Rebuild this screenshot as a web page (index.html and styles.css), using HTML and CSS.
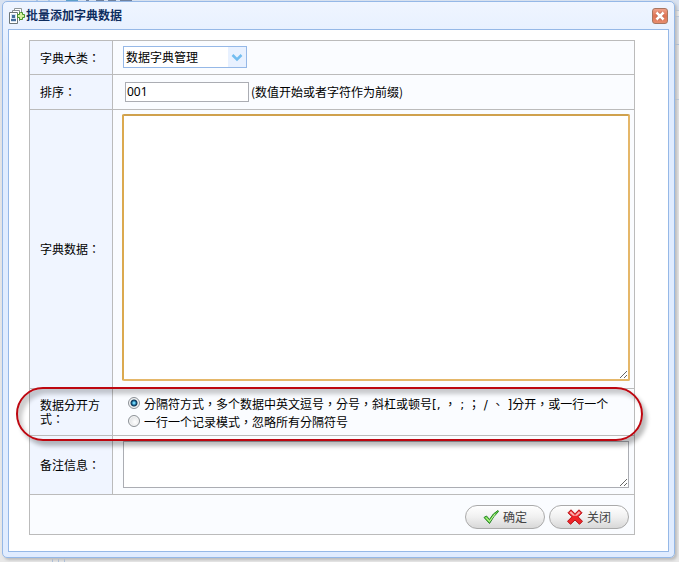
FILE: index.html
```html
<!DOCTYPE html>
<html lang="zh-Hant">
<head>
<meta charset="utf-8">
<title>批量添加字典数据</title>
<link rel="stylesheet" href="styles.css">
</head>
<body>
<div class="backdrop" aria-hidden="true"><span class="toolbar"></span><span class="right-edge"></span><span class="footer-lines"></span></div>
<main class="dialog">
  <header class="titlebar">
    <svg class="title-icon" viewBox="0 0 16 16" aria-hidden="true">
      <path d="M5.500 10V.5h7V12" fill="#fff" stroke="#8f9698"/>
      <path d="M3.500 13V2.500h7V13" fill="#fff" stroke="#858d90"/>
      <path d="M.5 4.500h8v11h-8z" fill="#fff" stroke="#6d7678"/>
      <path d="M2 6h5v8H2z" fill="#d3e1ef"/>
      <path d="M3 7h3v3H3zM2 11h5v2H2z" fill="#456d9b"/>
      <path d="M11.500 4.500h2v2h2v3h-2v2h-3v-2h-2v-3h2v-2z" fill="#d8f0a0" stroke="#47942b"/>
    </svg>
    <h1 class="title">批量添加字典数据</h1>
    <button class="close" type="button" aria-label="关闭窗口">
      <svg viewBox="0 0 16 16"><path d="M4.500 4.500l7 7M11.500 4.500l-7 7" stroke="#b5604c" stroke-width="4.500"/><path d="M4 4l8 8M12 4l-8 8" stroke="#fff" stroke-width="3"/></svg>
    </button>
  </header>
  <form class="content">
    <div class="form">
      <div class="row row-select">
        <label class="label" for="category">字典大类：</label>
        <div class="field">
          <span class="select-box">
            <select id="category"><option>数据字典管理</option></select>
            <svg class="arrow" viewBox="0 0 18 20" aria-hidden="true"><path d="M4.500 8l4.500 4.500L13.500 8" fill="none" stroke="#72bdf0" stroke-width="2.500"/></svg>
          </span>
        </div>
      </div>
      <div class="row row-order">
        <label class="label" for="order">排序：</label>
        <div class="field order-field">
          <input class="text-input" id="order" type="text" value="001">
          <span>(数值开始或者字符作为前缀)</span>
        </div>
      </div>
      <div class="row">
        <label class="label" for="data">字典数据：</label>
        <div class="field area-field"><textarea class="area area-active" id="data"></textarea></div>
      </div>
      <div class="row row-mode">
        <span class="label" id="mode-label">数据分开方式：</span>
        <div class="field modes" role="radiogroup" aria-labelledby="mode-label">
          <label class="mode"><input type="radio" name="mode" checked><span>分隔符方式，多个数据中英文逗号，分号，斜杠或顿号<span class="separators">[, ， ; ； / 、 ]</span>分开，或一行一个</span></label>
          <label class="mode"><input type="radio" name="mode"><span>一行一个记录模式，忽略所有分隔符号</span></label>
        </div>
        <div class="highlight"></div>
      </div>
      <div class="row">
        <label class="label" for="remark">备注信息：</label>
        <div class="field area-field remark-field"><textarea class="area area-small" id="remark"></textarea></div>
      </div>
      <div class="actions">
        <button class="action" type="submit">
          <svg viewBox="0 0 16 16" aria-hidden="true"><path d="M1 8.500l2.500-1.500 3 3.500Q10 4 15 1.500l.5 1Q10.500 7 6.500 14.500z" fill="#70dc3f" stroke="#25822b"/><path d="M3 8.500l3.500 4L12 5" fill="none" stroke="#c3f3a0"/></svg>
          确定
        </button>
        <button class="action" type="button">
          <svg viewBox="0 0 16 16" aria-hidden="true"><path d="M4 .8L8 4.800l4-4 3 3-4 4 4.500 4.500-3 3L8 11l-4.500 4.300-3-3L5 7.800l-4-4z" fill="#ef2529" stroke="#b51217"/><path d="M4 2.300L8 6.300l4-4 1.500 1.500-3.500 3H6L2.500 3.800z" fill="#f9b0b0"/></svg>
          关闭
        </button>
      </div>
    </div>
  </form>
</main>
</body>
</html>
```
FILE: styles.css
```css
* { box-sizing: border-box; }
body {
  margin: 0;
  min-height: 100vh;
  padding: 1px 4px 4px 2px;
  display: flex;
  position: relative;
  background: linear-gradient(#d8e2f1 0, #dfe2e9 43px, #e3e3e5 44px, #e8e8e8 100%);
  color: #000;
  font: 12px/14px "Noto Sans CJK TC", sans-serif;
  text-spacing-trim: space-all;
}
button, input, select, textarea { font: inherit; color: inherit; margin: 0; }
.backdrop { position: absolute; inset: 0; overflow: hidden; }
.toolbar {
  position: absolute;
  top: 0;
  left: 36px;
  width: 96px;
  height: 2px;
  background: linear-gradient(90deg, #a9c5e8 2px, transparent 2px 12px, #a9c5e8 12px 14px, transparent 14px 30px, #5b9fca 30px 42px, transparent 42px 50px, #6c7f9d 50px 53px, transparent 53px 60px, #6c7f9d 60px 68px, transparent 68px 72px, #6c7f9d 72px 80px, transparent 80px 84px, #6c7f9d 84px);
}
.right-edge { position: absolute; top: 10px; right: 0; width: 4px; height: 90px; border: solid #b9c9df; border-width: 1px 0; background: linear-gradient(#eee 5px, #b9c9df 5px 6px, transparent 6px 33px, #a9c0e0 33px 34px, transparent 34px); }
.footer-lines { position: absolute; bottom: 0; left: 52px; width: 13px; height: 3px; background: repeating-linear-gradient(90deg, #a9c0df 0 1px, transparent 1px 6px); }
.dialog {
  position: relative;
  flex: 1;
  min-width: 0;
  display: flex;
  flex-direction: column;
  padding: 0 5px 5px;
  border: 1px solid #95b8e7;
  border-radius: 5px;
  background: linear-gradient(#eff5ff 0, #e0ecff 60px);
  box-shadow: 2px 2px 3px #bbb;
}
.titlebar { height: 27px; display: flex; align-items: center; gap: 1px; padding: 0 1px; }
.title-icon { width: 16px; height: 16px; }
.title { flex: 1; margin: 0; padding-bottom: 2px; font-size: 12px; line-height: 16px; font-weight: 700; color: #0e2d5f; }
.close {
  width: 16px;
  height: 16px;
  padding: 0;
  border: 1px solid #a87660;
  border-radius: 3px;
  background: linear-gradient(#efa28b, #df7354 50%, #e78d6e);
}
.close svg { display: block; width: 14px; height: 14px; }
.content { flex: 1; border: 1px solid #95b8e7; background: #fff; padding: 10px 33px 16px 20px; }
.form { border: 1px solid #bbb; background: #fafcff; }
.row { display: flex; border-bottom: 1px solid #bbb; }
.row-select { height: 34px; }
.row-order { height: 35px; }
.row-mode { height: 47px; position: relative; z-index: 1; }
.label {
  flex: 0 0 83px;
  display: flex;
  align-items: center;
  padding: 0 8px 0 10px;
  border-right: 1px solid #bbb;
  background: #f0f5ff;
}
.field { flex: 1; min-width: 0; display: flex; align-items: center; padding: 5px 4px 6px 10px; }
.area-field { padding: 4px 4px 7px 9px; }
.remark-field { padding: 5px 5px 6px 10px; }
.select-box { position: relative; width: 124px; height: 22px; }
.select-box select {
  appearance: none;
  width: 100%;
  height: 100%;
  padding: 0 20px 0 2px;
  border: 1px solid #95b8e7;
  border-radius: 0;
  background: #fff;
}
.arrow { position: absolute; top: 1px; right: 1px; width: 18px; height: 20px; background: #e8f1ff; pointer-events: none; }
.order-field { padding-left: 12px; gap: 2px; }
.text-input { width: 124px; height: 20px; padding: 0 1px; border: 1px solid #abadb3; background: #fff; font-family: "Noto Sans", sans-serif; }
.area { display: block; width: 100%; height: 267px; border: 1px solid #abadb3; border-radius: 0; background: #fff; resize: vertical; outline: 0; }
.area-active { border: 2px solid; border-color: #cfa14e #e5b769 #e5b769 #dba94f; border-radius: 2px; }
.area-small { height: 47px; }
.modes { flex-direction: column; align-items: flex-start; justify-content: center; padding: 2px 0 0 15px; }
.mode { display: flex; align-items: flex-start; gap: 4px; height: 18px; line-height: 18px; white-space: nowrap; }
.separators { font-family: "DejaVu Sans", "Noto Sans CJK TC", sans-serif; }
.mode input {
  appearance: none;
  width: 12px;
  height: 12px;
  margin-top: 2px;
  border: 1px solid #8c9196;
  border-radius: 50%;
  background: radial-gradient(circle at 60% 60%, #fff, #d2d5d8);
  box-shadow: inset 0 0 0 1px #f6f6f6;
}
.mode input:checked { background: radial-gradient(circle at 50% 50%, #70d3f2 0 1px, #18689a 2px, #123652 3px, #e5e9ec 4px); }
.highlight {
  position: absolute;
  inset: -2px -9px -6px -14px;
  border: 2px solid #bd0710;
  border-radius: 27px;
  box-shadow: 4px 5px 4px #0004, inset 4px 5px 4px #0003;
  pointer-events: none;
}
.actions { height: 39px; display: flex; justify-content: flex-end; align-items: flex-start; gap: 4px; padding: 10px 5px 0; }
.action {
  width: 80px;
  height: 24px;
  display: flex;
  align-items: center;
  justify-content: center;
  gap: 4px;
  padding: 0;
  border: 1px solid #aaa;
  border-radius: 12px;
  background: linear-gradient(#fff, #f0f0f0 50%, #d8d8d8);
  color: #444;
}
.action svg { width: 16px; height: 16px; }
```
